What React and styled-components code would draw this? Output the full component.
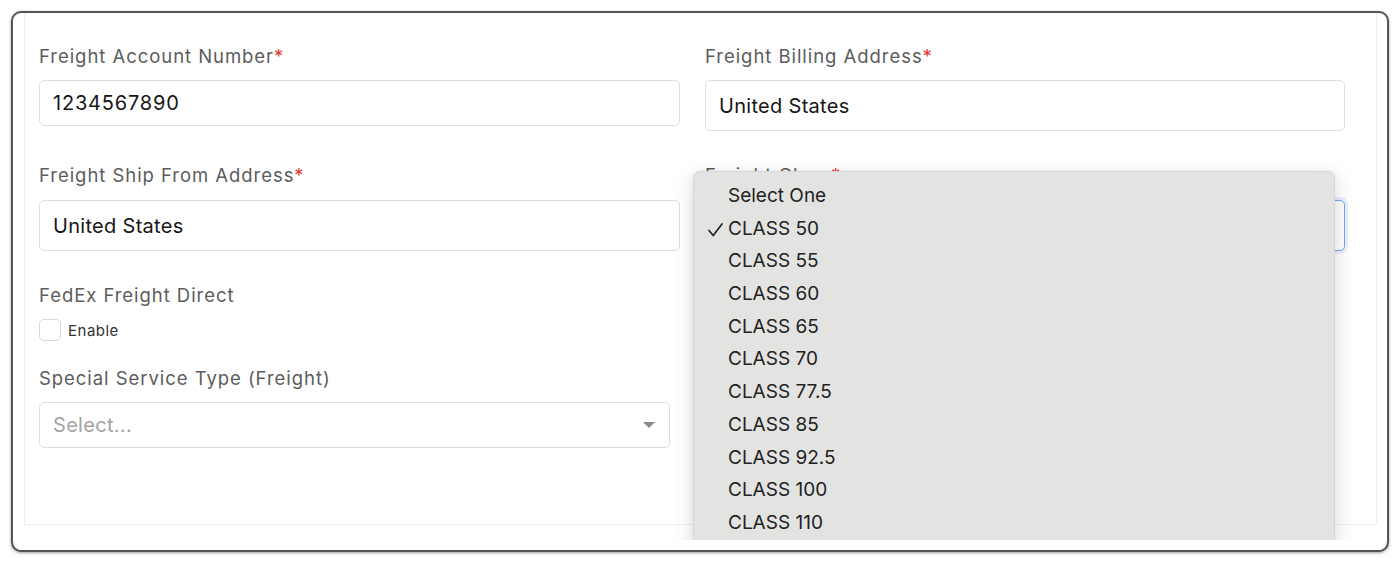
import React from 'react';
import styled, { createGlobalStyle } from 'styled-components';

const GlobalStyle = createGlobalStyle`
  html, body {
    margin: 0;
    padding: 0;
    background: #ffffff;
  }
  body {
    font-family: Inter, "Noto Sans", "Liberation Sans", sans-serif;
    -webkit-font-smoothing: antialiased;
  }
`;

const Frame = styled.div`
  margin: 11px;
  width: 1374px;
  height: 537px;
  border: 2px solid #555555;
  border-radius: 10px;
  box-shadow: 0 1px 3px rgba(0, 0, 0, 0.4);
  background: #ffffff;
  overflow: hidden;
`;

const Viewport = styled.div`
  position: relative;
  height: 527px;
  overflow: hidden;
  padding: 0 10px 15px 11px;
  box-sizing: border-box;
  display: flex;
  flex-direction: column;
`;

const Card = styled.div`
  flex: 1;
  box-sizing: border-box;
  border: 1px solid #efefef;
  border-top: none;
  padding: 31px 31px 0 14px;
  display: grid;
  grid-template-columns: 641px 640px;
  column-gap: 25px;
  row-gap: 32px;
  align-content: start;
`;

const Field = styled.div`
  display: flex;
  flex-direction: column;
  gap: ${p => p.$gap || 12}px;
`;

const Stack = styled.div`
  display: flex;
  flex-direction: column;
  gap: 25px;
`;

const Label = styled.label`
  font-size: 18.5px;
  line-height: 24px;
  color: #5c5c5c;
  letter-spacing: 0.95px;
`;

const Required = styled.span`
  color: #e5322d;
`;

const Input = styled.div`
  box-sizing: border-box;
  height: ${p => p.$h || 51}px;
  border: 1px solid ${p => (p.$focus ? '#79a5f2' : '#dedede')};
  box-shadow: ${p => (p.$focus ? '0 0 0 3px rgba(120, 165, 242, 0.18)' : 'none')};
  border-radius: 5px;
  padding: 0 13px;
  display: flex;
  align-items: center;
  font-size: 20px;
  letter-spacing: ${p => p.$ls || 0.3}px;
  color: ${p => (p.$placeholder ? '#a3a3a3' : '#161616')};
  margin-right: ${p => p.$mr || 0}px;
`;

const Caret = styled.span`
  margin-left: auto;
  width: 0;
  height: 0;
  border-left: 6px solid transparent;
  border-right: 6px solid transparent;
  border-top: 6px solid #8a8a8a;
  margin-right: 1px;
`;

const CheckRow = styled.div`
  display: flex;
  align-items: center;
  gap: 7px;
  font-size: 15px;
  letter-spacing: 0.5px;
  color: #333333;
`;

const Box = styled.span`
  box-sizing: border-box;
  width: 22px;
  height: 22px;
  border: 1px solid #d9d9d9;
  border-radius: 5px;
  background: #ffffff;
`;

const Menu = styled.ul`
  position: absolute;
  left: 680px;
  top: 158px;
  width: 642px;
  height: 400px;
  margin: 0;
  padding: 8px 0 0;
  list-style: none;
  box-sizing: border-box;
  background: #e3e3e2;
  border: 1px solid #d6d6d6;
  border-radius: 7px;
  box-shadow: 0 6px 22px rgba(0, 0, 0, 0.13), 0 0 8px rgba(0, 0, 0, 0.05);
`;

const Option = styled.li`
  position: relative;
  height: 32.7px;
  line-height: 32.7px;
  padding-left: 34px;
  font-size: 19px;
  color: #222222;
`;

const Tick = styled.svg`
  position: absolute;
  left: 14px;
  top: 10px;
`;

const options = [
  'Select One',
  'CLASS 50',
  'CLASS 55',
  'CLASS 60',
  'CLASS 65',
  'CLASS 70',
  'CLASS 77.5',
  'CLASS 85',
  'CLASS 92.5',
  'CLASS 100',
  'CLASS 110',
];

export default function App() {
  return (
    <>
      <GlobalStyle />
      <Frame>
        <Viewport>
          <Card>
            <Field>
              <Label>
                Freight Account Number<Required>*</Required>
              </Label>
              <Input $h={46} $ls={0.8}>1234567890</Input>
            </Field>
            <Field>
              <Label>
                Freight Billing Address<Required>*</Required>
              </Label>
              <Input>United States</Input>
            </Field>
            <Field $gap={13}>
              <Label>
                Freight Ship From Address<Required>*</Required>
              </Label>
              <Input>United States</Input>
            </Field>
            <Field $gap={13}>
              <Label>
                Freight Class<Required>*</Required>
              </Label>
              <Input $focus />
            </Field>
            <Stack>
              <Field>
                <Label>FedEx Freight Direct</Label>
                <CheckRow>
                  <Box />
                  Enable
                </CheckRow>
              </Field>
              <Field $gap={12}>
                <Label>Special Service Type (Freight)</Label>
                <Input $h={46} $mr={10} $placeholder>
                  Select...
                  <Caret />
                </Input>
              </Field>
            </Stack>
          </Card>
          <Menu>
            {options.map((o, i) => (
              <Option key={o}>
                {i === 1 && (
                  <Tick width="15" height="14" viewBox="0 0 15 14">
                    <path d="M1 7.5 L5.2 12.5 L14 1" fill="none" stroke="#222" strokeWidth="1.7" strokeLinecap="round" strokeLinejoin="round" />
                  </Tick>
                )}
                {o}
              </Option>
            ))}
          </Menu>
        </Viewport>
      </Frame>
    </>
  );
}
